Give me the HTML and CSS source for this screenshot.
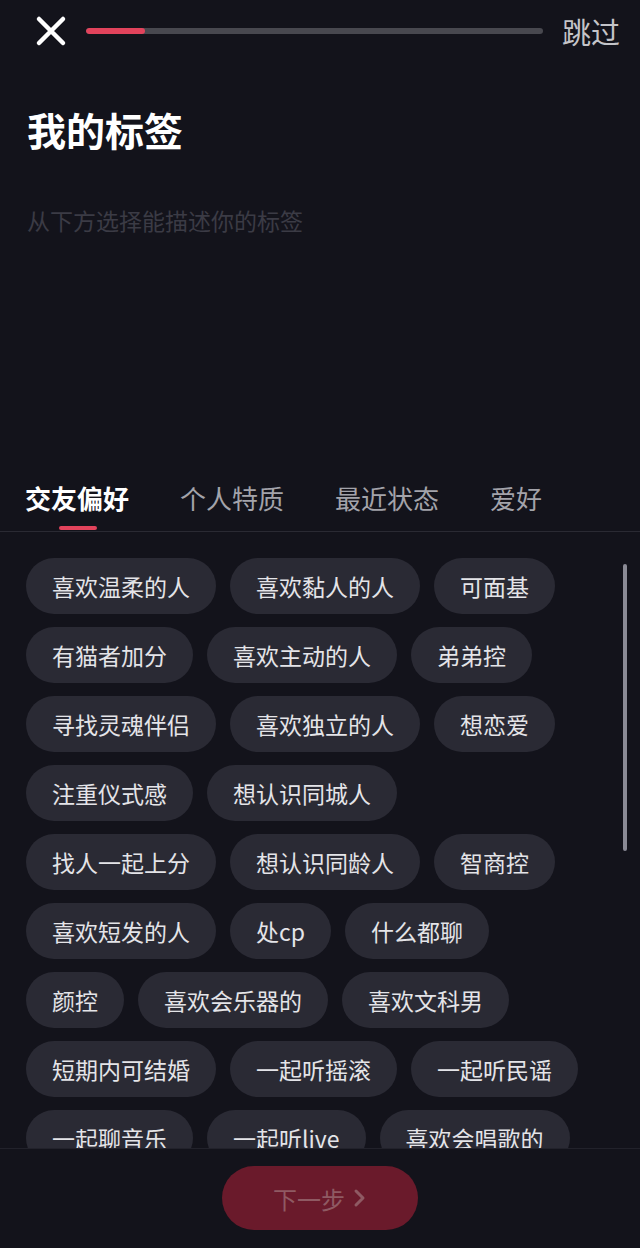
FILE: index.html
```html
<!DOCTYPE html>
<html lang="zh-CN">
<head>
<meta charset="utf-8">
<title>我的标签</title>
<link rel="stylesheet" href="styles.css">
</head>
<body>
<div class="page">
  <header class="topbar">
    <button class="close" aria-label="关闭">
      <svg width="32" height="32" viewBox="0 0 32 32"><path d="M4 4 L28 28 M28 4 L4 28" stroke="#fff" stroke-width="4.5" stroke-linecap="round" fill="none"/></svg>
    </button>
    <div class="progress"><div class="progress-fill"></div></div>
    <span class="skip">跳过</span>
  </header>

  <h1 class="title">我的标签</h1>
  <p class="subtitle">从下方选择能描述你的标签</p>

  <nav class="tabs">
    <span class="tab active">交友偏好</span>
    <span class="tab">个人特质</span>
    <span class="tab">最近状态</span>
    <span class="tab">爱好</span>
  </nav>

  <section class="chips-area">
    <div class="chips">
      <span class="chip">喜欢温柔的人</span>
      <span class="chip">喜欢黏人的人</span>
      <span class="chip">可面基</span>
      <span class="chip">有猫者加分</span>
      <span class="chip">喜欢主动的人</span>
      <span class="chip">弟弟控</span>
      <span class="chip">寻找灵魂伴侣</span>
      <span class="chip">喜欢独立的人</span>
      <span class="chip">想恋爱</span>
      <span class="chip">注重仪式感</span>
      <span class="chip">想认识同城人</span>
      <span class="chip">找人一起上分</span>
      <span class="chip">想认识同龄人</span>
      <span class="chip">智商控</span>
      <span class="chip">喜欢短发的人</span>
      <span class="chip">处cp</span>
      <span class="chip">什么都聊</span>
      <span class="chip">颜控</span>
      <span class="chip">喜欢会乐器的</span>
      <span class="chip">喜欢文科男</span>
      <span class="chip">短期内可结婚</span>
      <span class="chip">一起听摇滚</span>
      <span class="chip">一起听民谣</span>
      <span class="chip">一起聊音乐</span>
      <span class="chip">一起听live</span>
      <span class="chip">喜欢会唱歌的</span>
    </div>
    <div class="scrollbar"></div>
  </section>

  <footer class="footer">
    <button class="next">下一步<svg class="chev" width="14" height="20" viewBox="0 0 14 20"><path d="M3 3 L10 10 L3 17" stroke="currentColor" stroke-width="3" stroke-linecap="round" stroke-linejoin="round" fill="none"/></svg></button>
  </footer>
</div>
</body>
</html>
```

FILE: styles.css
```css
* { box-sizing: border-box; }
html, body {
  margin: 0;
  padding: 0;
  background: #13131b;
}
body {
  font-family: "Noto Sans CJK SC", "Noto Sans", sans-serif;
  color: #fff;
}
.page {
  width: 640px;
  height: 1248px;
  display: flex;
  flex-direction: column;
  overflow: hidden;
  background: #13131b;
}
.topbar {
  height: 62px;
  display: flex;
  align-items: center;
  padding: 0 20px 0 35px;
}
.close {
  background: none;
  border: 0;
  padding: 0;
  width: 32px;
  height: 32px;
  display: flex;
}
.progress {
  margin-left: 19px;
  width: 457px;
  height: 6px;
  border-radius: 3px;
  background: #48484f;
  overflow: hidden;
}
.progress-fill {
  width: 59px;
  height: 100%;
  background: #e2435c;
  border-radius: 3px;
}
.skip {
  margin-left: auto;
  font-size: 29px;
  color: #c4c4c8;
  line-height: 1;
}
.title {
  margin: 42px 0 0 27px;
  font-size: 39px;
  font-weight: 700;
  line-height: 50px;
  color: #fff;
}
.subtitle {
  margin: 50px 0 0 27px;
  font-size: 23px;
  line-height: 33px;
  color: #3b3b45;
}
.tabs {
  margin-top: 241px;
  display: flex;
  gap: 51px;
  padding: 0 0 0 25px;
  height: 54px;
  border-bottom: 1px solid #2a2a33;
  position: relative;
}
.tab {
  font-size: 26px;
  line-height: 40px;
  color: #a3a3aa;
  position: relative;
}
.tab.active {
  color: #fff;
  font-weight: 700;
}
.tab.active::after {
  content: "";
  position: absolute;
  left: 34px;
  top: 48px;
  width: 38px;
  height: 4px;
  border-radius: 2px;
  background: #e2435c;
}
.chips-area {
  flex: 1;
  position: relative;
  overflow: hidden;
}
.chips {
  display: flex;
  flex-wrap: wrap;
  gap: 13px 14px;
  padding: 26px 48px 0 26px;
}
.chip {
  height: 56px;
  line-height: 56px;
  padding: 0 26px;
  border-radius: 28px;
  background: #2a2a34;
  color: #e4e4e8;
  font-size: 23px;
  white-space: nowrap;
}
.scrollbar {
  position: absolute;
  right: 13px;
  top: 32px;
  width: 4px;
  height: 287px;
  border-radius: 2px;
  background: #8a8a95;
}
.footer {
  height: 100px;
  border-top: 1px solid #22222b;
  display: flex;
  justify-content: center;
  padding-top: 17px;
  background: #13131b;
}
.next {
  width: 196px;
  height: 64px;
  border-radius: 32px;
  border: 0;
  background: #6a1a2b;
  color: #8f5a63;
  font-family: "Noto Sans CJK SC", "Noto Sans", sans-serif;
  font-size: 24px;
  display: flex;
  align-items: center;
  justify-content: center;
  gap: 8px;
  padding: 0;
}
.chev {
  display: block;
}
```
